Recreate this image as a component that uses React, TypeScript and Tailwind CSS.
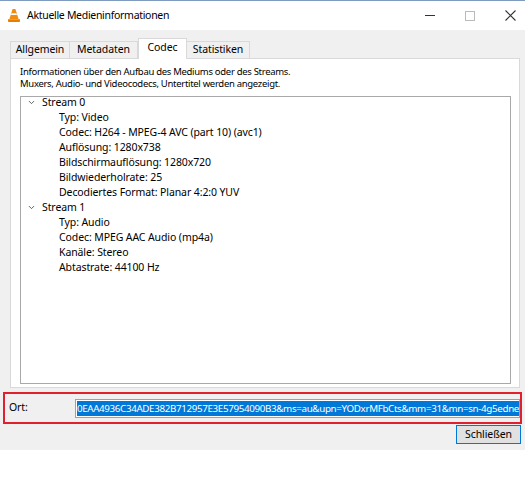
import { ChevronDown } from 'lucide-react';

const stream0 = [
  'Typ: Video',
  'Codec: H264 - MPEG-4 AVC (part 10) (avc1)',
  'Auflösung: 1280x738',
  'Bildschirmauflösung: 1280x720',
  'Bildwiederholrate: 25',
  'Decodiertes Format: Planar 4:2:0 YUV',
];

const stream1 = [
  'Typ: Audio',
  'Codec: MPEG AAC Audio (mp4a)',
  'Kanäle: Stereo',
  'Abtastrate: 44100 Hz',
];

function VlcIcon() {
  return (
    <svg width="14" height="15" viewBox="0 0 14 15">
      <path d="M5.6 1 H8.4 L11.6 11 H2.4 Z" fill="#f28c0f" />
      <path d="M4.6 5.2 H9.4 L10 7 H4 Z" fill="#fff" />
      <path d="M1 11.2 H13 V13.2 Q13 14 12 14 H2 Q1 14 1 13.2 Z" fill="#e67e00" />
    </svg>
  );
}

function StreamNode({ title, items }: { title: string; items: string[] }) {
  return (
    <div>
      <div className="flex h-[15px] items-center">
        <ChevronDown className="ml-[6px] h-[9px] w-[9px] text-[#555]" strokeWidth={2.5} />
        <span className="ml-[6px]">{title}</span>
      </div>
      {items.map(item => (
        <div key={item} className="flex h-[15px] items-center pl-[38px]">
          {item}
        </div>
      ))}
    </div>
  );
}

export default function App() {
  const tabs = ['Allgemein', 'Metadaten', 'Codec', 'Statistiken'];

  return (
    <div
      className="min-h-[485px] w-[529px] bg-white text-[10.5px] tracking-[-0.1px] text-black"
      style={{ fontFamily: '"Noto Sans", "Open Sans", sans-serif' }}
    >
      <div className="w-[525px] border-t border-[#7f9cc0] bg-[#f0f0f0]">
        {/* Titelleiste */}
        <div className="flex h-[29px] items-center bg-white">
          <div className="ml-[7px]">
            <VlcIcon />
          </div>
          <span className="ml-[6px] text-[10.5px] tracking-[-0.3px]">Aktuelle Medieninformationen</span>
          <div className="ml-auto flex items-center gap-[30px] pr-[9px] text-[#333]">
            <div className="h-px w-[10px] bg-[#333]" />
            <div className="h-[10px] w-[10px] border border-[#bbb]" />
            <svg width="11" height="11" viewBox="0 0 11 11">
              <path d="M0.5 0.5 L10.5 10.5 M10.5 0.5 L0.5 10.5" stroke="#333" strokeWidth="1.1" />
            </svg>
          </div>
        </div>

        {/* Tabs */}
        <div className="px-[10px] pt-[8px]">
          <div className="flex h-[20px] items-end">
            {tabs.map(tab =>
              tab === 'Codec' ? (
                <div
                  key={tab}
                  className="relative z-10 -mb-px flex h-[21px] w-[49px] items-center justify-center border border-b-0 border-[#d9d9d9] bg-white pb-[2px]"
                >
                  {tab}
                </div>
              ) : (
                <div
                  key={tab}
                  className={
                    'flex h-[17px] items-center justify-center border border-b-0 border-[#d9d9d9] bg-[#f0f0f0] ' +
                    (tab === 'Allgemein' ? 'w-[60px]' : tab === 'Metadaten' ? 'w-[68px] border-l-0' : 'w-[63px] border-l-0')
                  }
                >
                  {tab}
                </div>
              )
            )}
          </div>

          <div className="h-[330px] w-[510px] border border-[#d9d9d9] bg-white pl-[9px] pt-[7px]">
            <p className="text-[9.5px] leading-[12px] tracking-[-0.3px]">
              Informationen über den Aufbau des Mediums oder des Streams.
            </p>
            <p className="text-[9.5px] leading-[12px] tracking-[-0.3px]">
              Muxers, Audio- und Videocodecs, Untertitel werden angezeigt.
            </p>
            <div className="mt-[6px] h-[288px] w-[491px] border border-[#a9a9a9] bg-white">
              <div className="-mt-[2px]">
                <StreamNode title="Stream 0" items={stream0} />
                <StreamNode title="Stream 1" items={stream1} />
              </div>
            </div>
          </div>
        </div>

        {/* Ort */}
        <div className="ml-[3px] mt-[4px] flex h-[32px] w-[519px] items-center border-2 border-[#e0202c]">
          <span className="ml-[4px] w-[66px]">Ort:</span>
          <div className="h-[19px] w-[446px] overflow-hidden whitespace-nowrap border border-[#a0a0a0] bg-white p-px">
            <span className="inline-block h-[15px] bg-[#0078d7] pr-px text-[9.8px] leading-[15px] tracking-[-0.35px] text-white">
              0EAA4936C34ADE382B712957E3E57954090B3&amp;ms=au&amp;upn=YODxrMFbCts&amp;mm=31&amp;mn=sn-4g5ednek7l&amp;ms=au&amp;mv=m&amp;pl=24
            </span>
          </div>
        </div>

        <div className="flex justify-end pb-[6px] pr-[4px] pt-px">
          <button className="h-[19px] w-[65px] border border-[#0078d7] bg-[#e1e1e1] leading-[15px]">
            Schließen
          </button>
        </div>
      </div>
    </div>
  );
}
